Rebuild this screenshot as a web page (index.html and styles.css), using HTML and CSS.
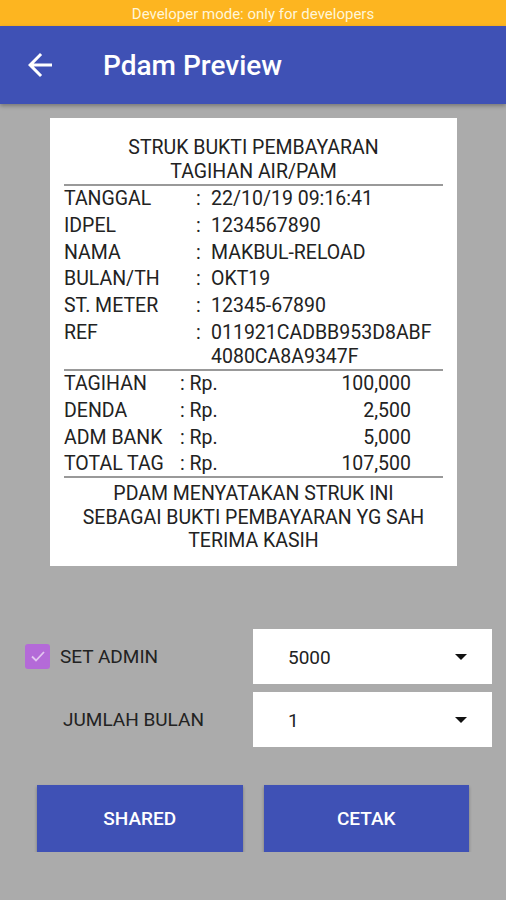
FILE: index.html
```html
<!DOCTYPE html>
<html lang="en">
<head>
<meta charset="UTF-8" />
<meta name="viewport" content="width=device-width, initial-scale=1" />
<title>Pdam Preview</title>
<link rel="stylesheet" href="styles.css">
</head>
<body>

<div class="devbar">Developer mode: only for developers</div>

<div class="appbar">
  <svg class="back" width="36" height="36" viewBox="0 0 24 24">
    <path d="M20 11H7.83l5.59-5.59L12 4l-8 8 8 8 1.41-1.41L7.83 13H20v-2z" fill="#fff"/>
  </svg>
  <span class="title">Pdam Preview</span>
</div>

<div class="receipt">
  <div class="r-head">STRUK BUKTI PEMBAYARAN<br>TAGIHAN AIR/PAM</div>
  <div class="info">
    <span>TANGGAL</span><span>:</span><span>22/10/19 09:16:41</span>
    <span>IDPEL</span><span>:</span><span>1234567890</span>
    <span>NAMA</span><span>:</span><span>MAKBUL-RELOAD</span>
    <span>BULAN/TH</span><span>:</span><span>OKT19</span>
    <span>ST. METER</span><span>:</span><span>12345-67890</span>
    <span>REF</span><span>:</span><span>011921CADBB953D8ABF<br>4080CA8A9347F</span>
  </div>
  <div class="money">
    <span>TAGIHAN</span><span>: Rp.</span><span class="amt">100,000</span>
    <span>DENDA</span><span>: Rp.</span><span class="amt">2,500</span>
    <span>ADM BANK</span><span>: Rp.</span><span class="amt">5,000</span>
    <span>TOTAL TAG</span><span>: Rp.</span><span class="amt">107,500</span>
  </div>
  <div class="r-foot">PDAM MENYATAKAN STRUK INI<br>SEBAGAI BUKTI PEMBAYARAN YG SAH<br>TERIMA KASIH</div>
</div>

<div class="controls">
  <div class="ctl-row">
    <label class="check">
      <span class="box">
        <svg width="24" height="24" viewBox="0 0 24 24">
          <path d="M6 12.5l4 4 8-8.5" fill="none" stroke="#e3c6f0" stroke-width="1.8"/>
        </svg>
      </span>
      SET ADMIN
    </label>
    <div class="spinner"><span>5000</span><span class="caret"></span></div>
  </div>
  <div class="ctl-row">
    <span class="lbl">JUMLAH BULAN</span>
    <div class="spinner"><span>1</span><span class="caret"></span></div>
  </div>
</div>

<div class="actions">
  <button>SHARED</button>
  <button>CETAK</button>
</div>

</body>
</html>
```

FILE: styles.css
```css
body { margin: 0; background: #ababab; font-family: Roboto, "Noto Sans", sans-serif; color: #222; }
.devbar { height: 26px; line-height: 28px; background: #fdb520; color: #fff6d8; font-size: 15px; text-align: center; }
.appbar { height: 78px; background: #3f51b5; display: flex; align-items: center; color: #fff; box-shadow: 0 2px 4px rgba(0,0,0,0.3); position: relative; }
.back { margin-left: 22px; }
.title { margin-left: 45px; font-size: 28px; font-weight: 500; }

.receipt { background: #fff; width: 379px; margin: 14px 0 0 50px; padding: 18px 14px 13px; font-size: 19.5px; line-height: 24px; }
.r-head, .r-foot { text-align: center; }
.r-head { border-bottom: 2px solid #999; }
.info { display: grid; grid-template-columns: 132px 15px 1fr; row-gap: 2.8px; padding: 1px 0 0; border-bottom: 2px solid #999; }
.money { display: grid; grid-template-columns: 116px 1fr 100px; row-gap: 2.8px; padding: 1px 32px 0 0; border-bottom: 2px solid #999; }
.amt { text-align: right; }
.r-foot { padding-top: 4px; line-height: 23.5px; }

.controls { margin-top: 63px; display: flex; flex-direction: column; gap: 8px; }
.ctl-row { display: flex; align-items: center; }
.check { width: 228px; margin-left: 25px; display: flex; align-items: center; gap: 10px; font-size: 19px; }
.box { width: 25px; height: 25px; border-radius: 3px; background: #b46ad8; display: flex; align-items: center; justify-content: center; }
.lbl { width: 190px; margin-left: 63px; font-size: 19px; }
.spinner { width: 179px; height: 53px; padding: 2px 25px 0 35px; background: #fff; display: flex; align-items: center; justify-content: space-between; font-size: 19px; }
.caret { width: 0; height: 0; border-left: 6px solid transparent; border-right: 6px solid transparent; border-top: 6px solid #111; }

.actions { margin: 38px 37px 0; display: flex; gap: 21px; }
.actions button { flex: 1; height: 67px; border: none; background: #3f51b5; color: #fff; font-family: Roboto, sans-serif; font-size: 19px; font-weight: 500; box-shadow: 0 2px 3px rgba(0,0,0,0.3); }
```
